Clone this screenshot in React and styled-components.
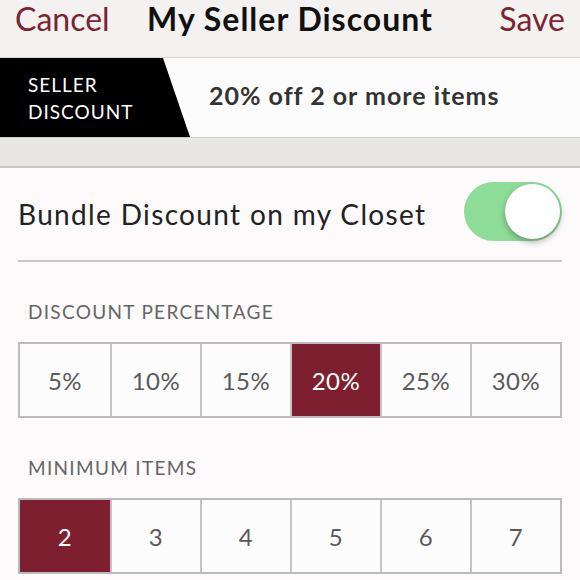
import React, { useState } from 'react'
import styled, { createGlobalStyle } from 'styled-components'

const GlobalStyle = createGlobalStyle`
  body {
    margin: 0;
    background: #fcfafb;
    font-family: 'Lato', 'Open Sans', sans-serif;
  }
`;

const Header = styled.div`
  height: 57px;
  background: #f4f2f1;
  display: grid;
  grid-template-columns: 1fr auto 1fr;
  align-items: start;
  padding: 0 15px;
`;

const HeaderLink = styled.span`
  justify-self: ${p => (p.$end ? 'end' : 'start')};
  color: #7b2432;
  font-size: 32px;
  line-height: 38px;
`;

const Title = styled.span`
  color: #111;
  font-size: 32px;
  font-weight: 700;
  letter-spacing: 1px;
  line-height: 38px;
`;

const Banner = styled.div`
  height: 79px;
  display: flex;
  align-items: center;
  background: #fdfcfc;
  border-top: 1px solid #d5d3d1;
  border-bottom: 1px solid #cfcdcb;
`;

const Tag = styled.div`
  align-self: stretch;
  width: 190px;
  box-sizing: border-box;
  padding: 13px 0 0 28px;
  background: #000;
  color: #fff;
  font-size: 19px;
  letter-spacing: 1px;
  line-height: 27px;
  clip-path: polygon(0 0, 163px 0, 100% 100%, 0 100%);
`;

const Offer = styled.div`
  margin: 0 0 5px 19px;
  font-size: 25px;
  font-weight: 700;
  letter-spacing: 1px;
  color: #333;
`;

const Strip = styled.div`
  height: 28px;
  background: #e9e7e4;
  border-bottom: 2px solid #cbc9c6;
`;

const Content = styled.div`
  padding: 0 18px;
`;

const ToggleRow = styled.div`
  height: 92px;
  display: flex;
  align-items: center;
  justify-content: space-between;
  border-bottom: 2px solid #c8c6c5;
`;

const RowLabel = styled.span`
  font-size: 28px;
  letter-spacing: 1.35px;
  color: #222;
`;

const Switch = styled.button`
  width: 98px;
  height: 59px;
  border: none;
  border-radius: 30px;
  background: ${p => (p.$on ? '#8ddc97' : '#e5e5e5')};
  padding: 2px;
  display: flex;
  justify-content: ${p => (p.$on ? 'flex-end' : 'flex-start')};
  align-items: center;
  cursor: pointer;
  margin-top: -6px;
`;

const Knob = styled.span`
  width: 55px;
  height: 55px;
  border-radius: 50%;
  background: #fff;
  box-shadow: 0 3px 6px rgba(0, 0, 0, 0.3);
`;

const SectionLabel = styled.div`
  padding: 38px 0 0 10px;
  height: 42px;
  font-size: 19px;
  letter-spacing: 1.3px;
  color: #666;
`;

const Segments = styled.div`
  display: grid;
  grid-template-columns: repeat(6, 1fr);
  border: 2px solid #bdbbba;
  background: #fdfcfc;
`;

const Cell = styled.button`
  height: 72px;
  border: none;
  border-left: 2px solid #c6c4c3;
  background: ${p => (p.$active ? '#7d1f2e' : 'transparent')};
  color: ${p => (p.$active ? '#fff' : '#5a5a5a')};
  font-family: inherit;
  font-size: 24px;
  letter-spacing: 0.5px;
  padding: 0;
  cursor: pointer;

  &:first-child {
    border-left: none;
  }
`;

const percents = ['5%', '10%', '15%', '20%', '25%', '30%']
const items = ['2', '3', '4', '5', '6', '7']

const App = () => {
  const [on, setOn] = useState(true)
  const [pct, setPct] = useState('20%')
  const [min, setMin] = useState('2')

  return (
    <>
      <GlobalStyle />
      <Header>
        <HeaderLink>Cancel</HeaderLink>
        <Title>My Seller Discount</Title>
        <HeaderLink $end>Save</HeaderLink>
      </Header>
      <Banner>
        <Tag>SELLER<br />DISCOUNT</Tag>
        <Offer>{pct} off {min} or more items</Offer>
      </Banner>
      <Strip />
      <Content>
        <ToggleRow>
          <RowLabel>Bundle Discount on my Closet</RowLabel>
          <Switch $on={on} onClick={() => setOn(!on)}><Knob /></Switch>
        </ToggleRow>
        <SectionLabel>DISCOUNT PERCENTAGE</SectionLabel>
        <Segments>
          {percents.map(v => (
            <Cell key={v} $active={v === pct} onClick={() => setPct(v)}>{v}</Cell>
          ))}
        </Segments>
        <SectionLabel>MINIMUM ITEMS</SectionLabel>
        <Segments>
          {items.map(v => (
            <Cell key={v} $active={v === min} onClick={() => setMin(v)}>{v}</Cell>
          ))}
        </Segments>
      </Content>
    </>
  )
}

export default App
